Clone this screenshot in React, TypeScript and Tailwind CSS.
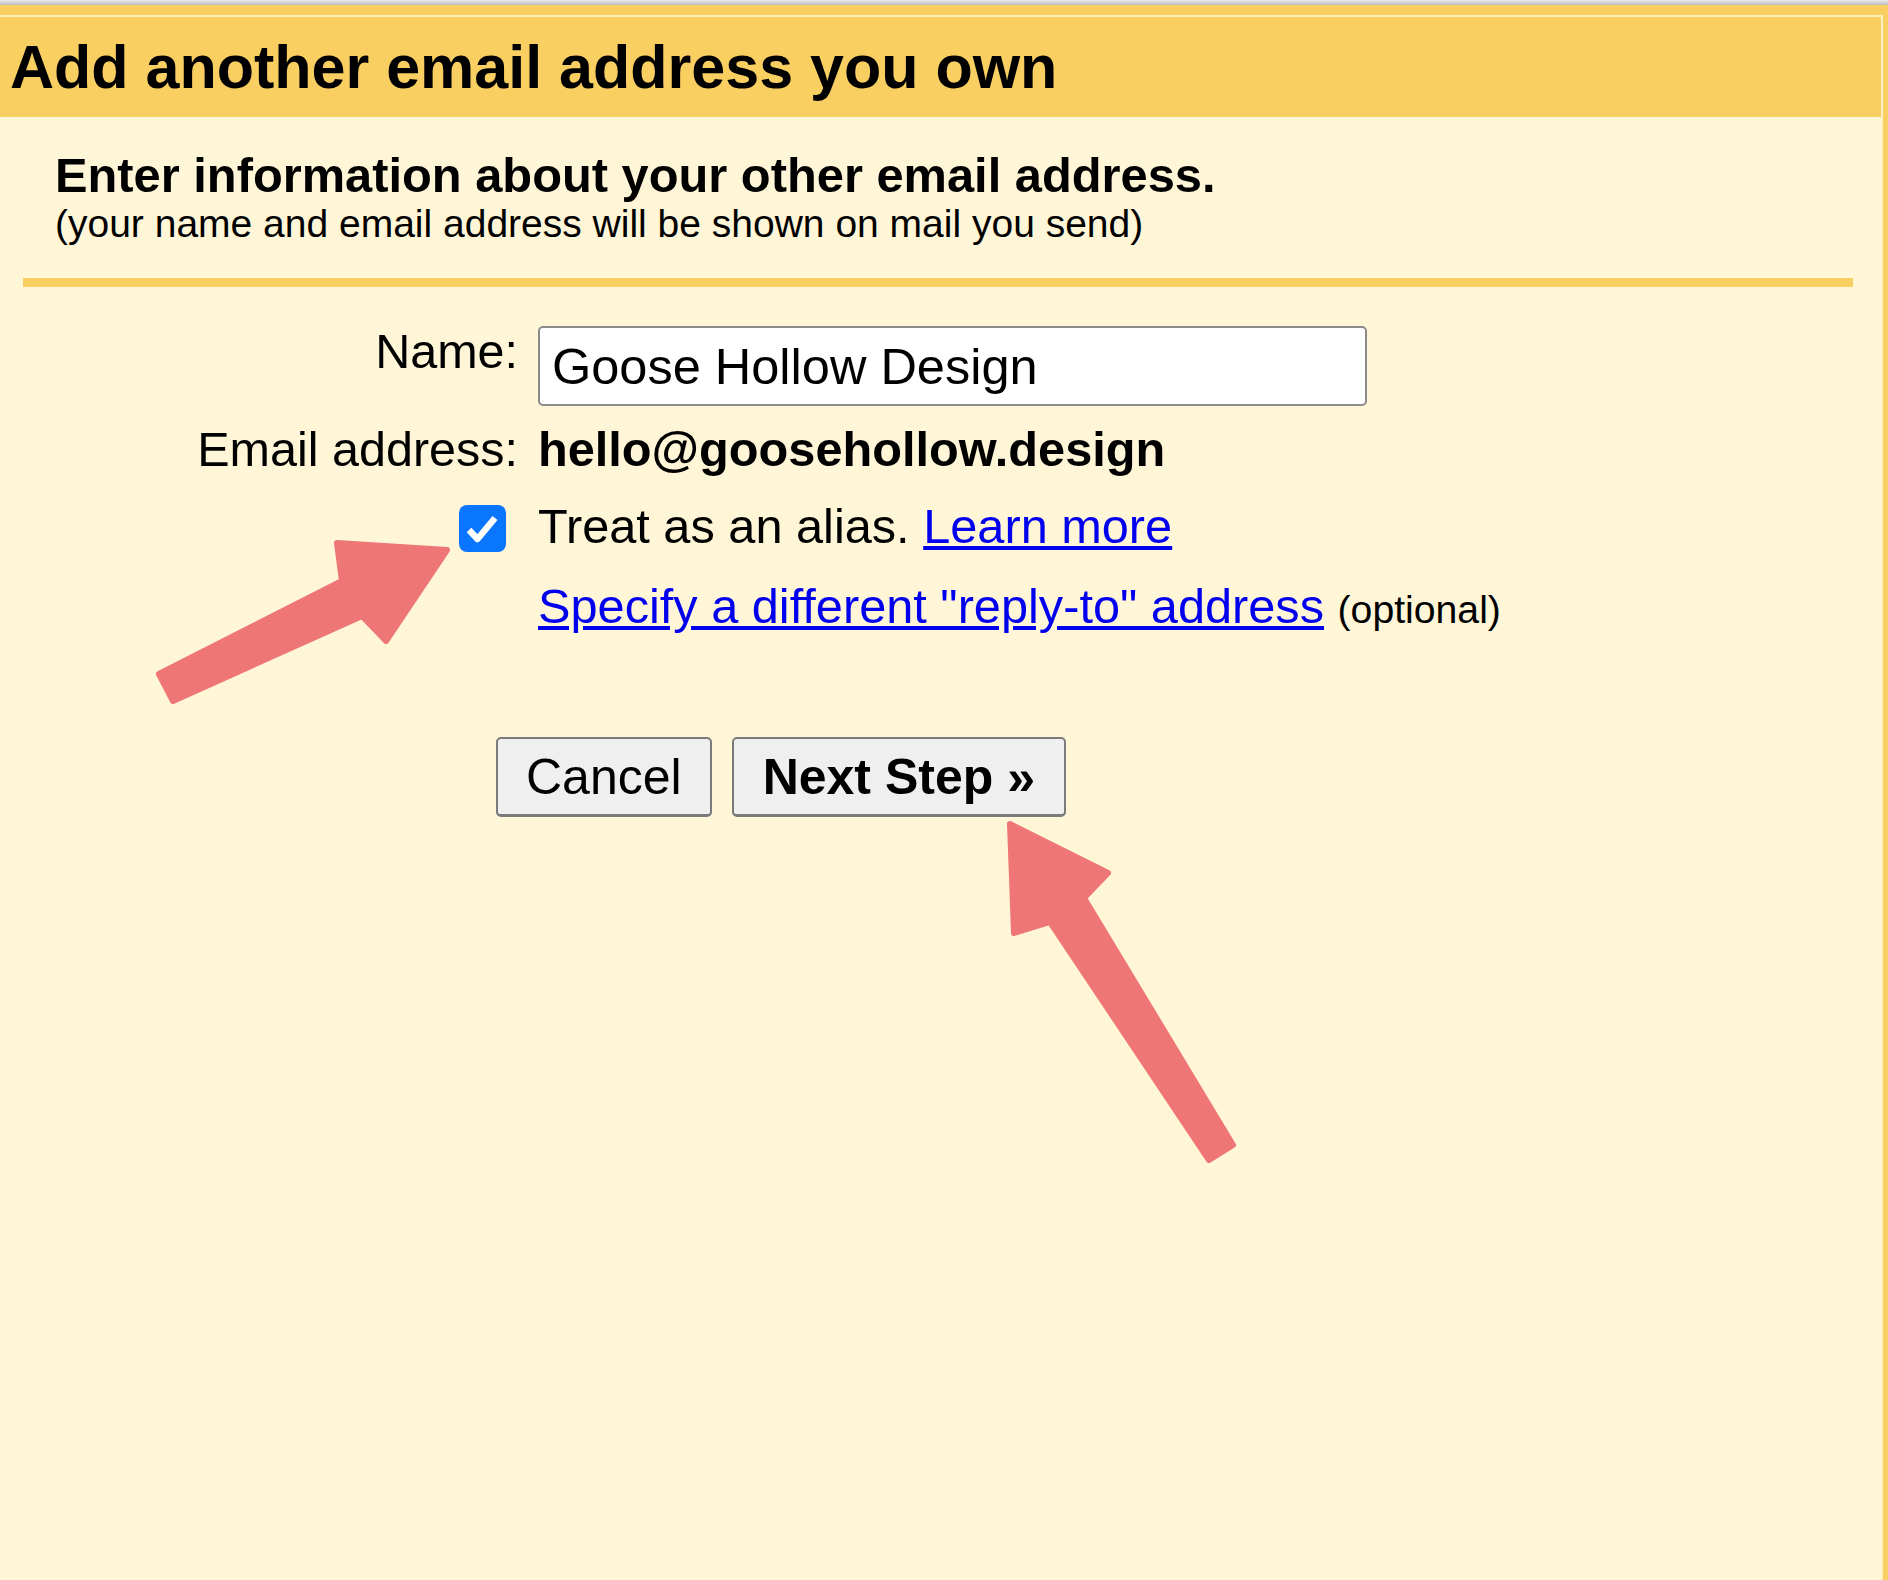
import React from 'react'

const arrowColor = '#ee7676'

function FormRow({ label, children, className = '' }: { label?: React.ReactNode; children: React.ReactNode; className?: string }) {
  return (
    <div className={`flex gap-[20px] ${className}`}>
      <div className="flex w-[518px] shrink-0 justify-end text-[48.5px]">{label}</div>
      <div className="text-[48.7px]">{children}</div>
    </div>
  )
}

function Checkbox() {
  return (
    <div className="mr-[12px] mt-[3px] flex h-[47px] w-[47px] items-center justify-center rounded-[8px] bg-[#0a76ff]">
      <svg width="47" height="47" viewBox="0 0 47 47">
        <polyline points="10,25 18.5,34 36,13" fill="none" stroke="#fff" strokeWidth="6.5" strokeLinejoin="round" />
      </svg>
    </div>
  )
}

function Arrows() {
  // annotation arrows drawn over the form
  return (
    <svg className="pointer-events-none absolute left-0 top-0" width="1888" height="1580" viewBox="0 0 1888 1580">
      <polygon
        points="159,674 342,581 337,543 447,550 386,641 362,616 173,701"
        fill={arrowColor}
        stroke={arrowColor}
        strokeWidth="6"
        strokeLinejoin="round"
      />
      <polygon
        points="1010,824 1108,873 1084,898 1233,1145 1209,1160 1050,922 1014,933"
        fill={arrowColor}
        stroke={arrowColor}
        strokeWidth="6"
        strokeLinejoin="round"
      />
    </svg>
  )
}

export default function App() {
  return (
    <div className="relative flex h-[1580px] w-full flex-col bg-[#f9cf62] font-['Liberation_Sans',Arial,sans-serif] text-black">
      <div className="h-[5px] bg-linear-to-b from-[#ececec] to-[#bcbcbc]" />
      <div className="flex flex-1 flex-col pr-[5px] pt-[10px]">
        <div className="flex flex-1 flex-col border-r-2 border-t-2 border-[#fff0c4] bg-[#fff6d8]">
          {/* header */}
          <div className="flex h-[100px] items-center bg-[#f9cf62] pl-[10px]">
            <h1 className="text-[61px] font-bold leading-[61px]">Add another email address you own</h1>
          </div>

          <div className="pt-[34px]">
            <div className="pl-[55px]">
              <p className="text-[48.8px] font-bold leading-[48px]">Enter information about your other email address.</p>
              <p className="mt-[6px] text-[39px] leading-[38px]">(your name and email address will be shown on mail you send)</p>
            </div>
            <div className="ml-[23px] mr-[28px] mt-[35px] h-[9px] bg-[#f9cf62]" />

            <div className="leading-[48px]">
              <FormRow className="mt-[39px]" label={<span className="mt-[1px]">Name:</span>}>
                <input
                  readOnly
                  value="Goose Hollow Design"
                  className="h-[80px] w-[829px] rounded-[5px] border-2 border-[#8a8a8a] bg-white px-[12px] text-[50.5px] text-black outline-none"
                />
              </FormRow>
              <FormRow className="mt-[19px]" label="Email address:">
                <span className="font-bold">hello@goosehollow.design</span>
              </FormRow>
              <FormRow className="mt-[29px]" label={<Checkbox />}>
                <span>
                  Treat as an alias.{' '}
                  <a href="#" className="text-[#0000ee] underline">Learn more</a>
                </span>
              </FormRow>
              <FormRow className="mt-[30px]">
                <span>
                  <a href="#" className="text-[#0000ee] underline">Specify a different "reply-to" address</a>{' '}
                  <span className="text-[39.2px] leading-[38px]">(optional)</span>
                </span>
              </FormRow>
            </div>

            <div className="ml-[496px] mt-[107px] flex gap-[20px] text-[50px]">
              <button className="h-[80px] rounded-[5px] border-2 border-b-[3px] border-[#7b7b7b] bg-[#efefef] px-[28px] leading-none text-black">
                Cancel
              </button>
              <button className="h-[80px] rounded-[5px] border-2 border-b-[3px] border-[#7b7b7b] bg-[#efefef] px-[29px] font-bold leading-none text-black">
                Next Step »
              </button>
            </div>
          </div>
        </div>
      </div>
      <Arrows />
    </div>
  )
}
